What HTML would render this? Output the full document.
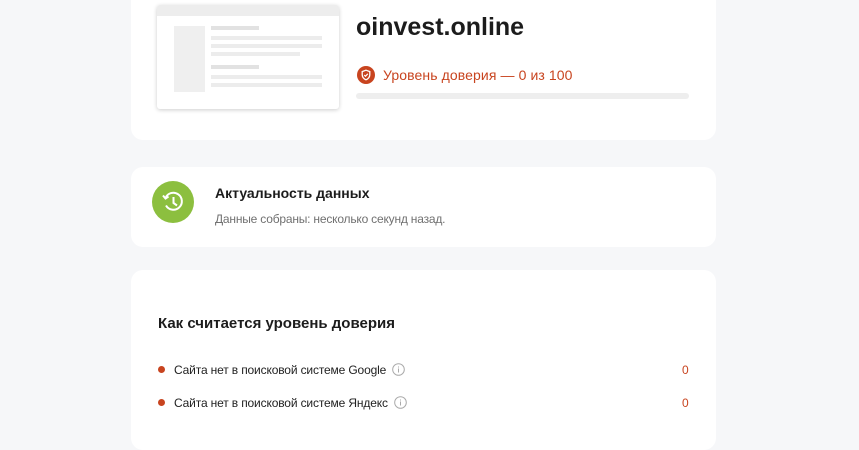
<!DOCTYPE html>
<html><head><meta charset="utf-8"><style>
*{margin:0;padding:0;box-sizing:border-box}
body{width:859px;height:422px;overflow:hidden;background:#f6f7f9;font-family:"Liberation Sans",sans-serif;position:relative}
.card{position:absolute;left:131px;width:585px;background:#fff;border-radius:12px}
.a{position:absolute}
.g{position:absolute;background:#ececec}
</style></head><body>
<div class="card" style="top:-20px;height:160px"></div>
<div class="a" style="left:157px;top:5px;width:182px;height:104px;background:#fff;border-radius:3px;box-shadow:0 1px 4px rgba(0,0,0,.2);overflow:hidden">
 <div class="g" style="left:0;top:0;width:182px;height:11px;background:#ededed"></div>
 <div class="g" style="left:17px;top:21px;width:31px;height:66px;background:#efefef"></div>
 <div class="g" style="left:54px;top:21px;width:48px;height:4px;background:#e2e2e2"></div>
 <div class="g" style="left:54px;top:31px;width:111px;height:4px"></div>
 <div class="g" style="left:54px;top:39px;width:111px;height:4px"></div>
 <div class="g" style="left:54px;top:47px;width:89px;height:4px"></div>
 <div class="g" style="left:54px;top:60px;width:48px;height:4px;background:#e2e2e2"></div>
 <div class="g" style="left:54px;top:70px;width:111px;height:4px"></div>
 <div class="g" style="left:54px;top:78px;width:111px;height:4px"></div>
</div>
<div class="a" style="left:356px;top:13px;font-size:25px;font-weight:bold;color:#1c1c1c">oinvest.online</div>
<svg class="a" style="left:357px;top:66px" width="18" height="18" viewBox="0 0 18 18"><circle cx="9" cy="9" r="9" fill="#c8441f"/><path d="M9 4.2l3.8 1.4v3c0 2.4-1.6 4.2-3.8 5.2-2.2-1-3.8-2.8-3.8-5.2v-3z" fill="none" stroke="#fff" stroke-width="1.3"/><path d="M7.2 9l1.3 1.3 2.3-2.5" fill="none" stroke="#fff" stroke-width="1.2"/></svg>
<div class="a" style="left:383px;top:67px;font-size:14px;color:#c8441f;letter-spacing:0.1px">Уровень доверия — 0 из 100</div>
<div class="a" style="left:356px;top:93px;width:333px;height:6px;border-radius:3px;background:#eeeeee"></div>

<div class="card" style="top:167px;height:80px"></div>
<svg class="a" style="left:152px;top:181px" width="42" height="42" viewBox="0 0 42 42"><circle cx="21" cy="21" r="21" fill="#8cbf3f"/><path d="M14 24.5A8.5 8.5 0 1 0 13.5 17" fill="none" stroke="#fff" stroke-width="2"/><path d="M11 14.5l2.5 3 3-2" fill="none" stroke="#fff" stroke-width="2"/><path d="M21.5 16v6l3.5 2.5" fill="none" stroke="#fff" stroke-width="2"/></svg>
<div class="a" style="left:215px;top:185px;font-size:14px;font-weight:bold;color:#1c1c1c">Актуальность данных</div>
<div class="a" style="left:215px;top:212px;font-size:12px;color:#707070;letter-spacing:-0.2px">Данные собраны: несколько секунд назад.</div>

<div class="card" style="top:270px;height:180px"></div>
<div class="a" style="left:158px;top:315px;font-size:15px;font-weight:bold;color:#1c1c1c">Как считается уровень доверия</div>
<div class="a" style="left:158px;top:366px;width:7px;height:7px;border-radius:50%;background:#c8441f"></div>
<div class="a" style="left:174px;top:363px;font-size:12px;color:#222;letter-spacing:-0.15px">Сайта нет в поисковой системе Google</div>
<svg class="a" style="left:392px;top:363px" width="13" height="13"><circle cx="6.5" cy="6.5" r="5.8" fill="none" stroke="#aaa"/><path d="M6.5 5.5v4M6.5 3.5v1" stroke="#aaa"/></svg>
<div class="a" style="left:682px;top:363px;font-size:12px;color:#c8441f">0</div>
<div class="a" style="left:158px;top:399px;width:7px;height:7px;border-radius:50%;background:#c8441f"></div>
<div class="a" style="left:174px;top:396px;font-size:12px;color:#222;letter-spacing:-0.15px">Сайта нет в поисковой системе Яндекс</div>
<svg class="a" style="left:394px;top:396px" width="13" height="13"><circle cx="6.5" cy="6.5" r="5.8" fill="none" stroke="#aaa"/><path d="M6.5 5.5v4M6.5 3.5v1" stroke="#aaa"/></svg>
<div class="a" style="left:682px;top:396px;font-size:12px;color:#c8441f">0</div>
</body></html>
